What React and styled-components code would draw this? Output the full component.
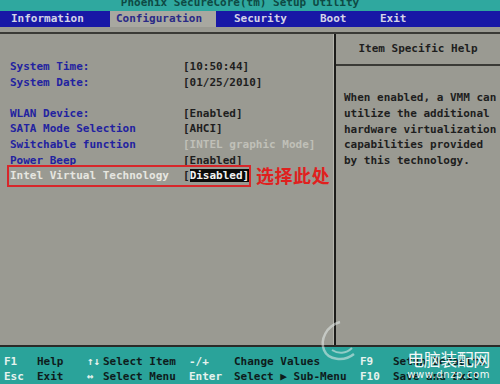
import React from 'react';
import styled, { createGlobalStyle } from 'styled-components';

const GlobalStyle = createGlobalStyle`
  html, body {
    margin: 0;
    padding: 0;
    background: #9a9a92;
  }
  body {
    width: 500px;
    height: 384px;
    overflow: hidden;
    font-family: "DejaVu Sans Mono", "Liberation Mono", monospace;
    font-size: 11px;
    font-weight: bold;
  }
`;

const Screen = styled.div`
  position: relative;
  width: 500px;
  height: 384px;
  display: flex;
  flex-direction: column;
  background: #9a9a92;
  overflow: hidden;
`;

const TitleBar = styled.div`
  height: 11px;
  background: #2fa89f;
  color: #0e4a44;
  text-align: center;
  padding-right: 20px;
  line-height: 6px;
  overflow: hidden;
`;

const MenuBar = styled.div`
  height: 16px;
  background: #1818a6;
  display: flex;
  align-items: stretch;
`;

const Tab = styled.div`
  width: ${p => p.$w}px;
  padding-left: ${p => p.$pad || 0}px;
  box-sizing: border-box;
  line-height: 16px;
  color: ${p => (p.$active ? '#2a2a86' : '#d4d4e8')};
  background: ${p => (p.$active ? '#a8a8a0' : 'transparent')};
`;

const Main = styled.div`
  margin-top: 5px;
  border-top: 2px solid #3a3a36;
  height: 312px;
  display: flex;
`;

const LeftPanel = styled.div`
  width: 334px;
  padding: 25px 0 0 10px;
  box-sizing: border-box;
  border-right: 1px solid #b6b6ae;
`;

const RightPanel = styled.div`
  flex: 1;
  border-left: 2px solid #1c1c1a;
  display: flex;
  flex-direction: column;
`;

const HelpHeader = styled.div`
  height: 30px;
  border-bottom: 2px solid #3a3a36;
  color: #1e1e1e;
  display: flex;
  align-items: center;
  justify-content: center;
`;

const HelpText = styled.div`
  padding: 24px 0 0 8px;
  color: #1e1e1e;
  line-height: 15.8px;
  white-space: pre;
`;

const Row = styled.div`
  display: grid;
  grid-template-columns: 173px 1fr;
  line-height: 15.6px;
  height: 15.6px;
  margin-bottom: ${p => (p.$gap ? 15.6 : 0)}px;
  white-space: pre;
`;

const Label = styled.span`
  color: ${p => (p.$light ? '#e6e6e0' : '#2222a0')};
`;

const Value = styled.span`
  color: ${p => (p.$dim ? '#c0c0b8' : '#1e1e1e')};
`;

const Picked = styled.span`
  background: #0a0a0a;
  color: #f2f2f2;
`;

const Marked = styled.div`
  position: relative;
  &::after {
    content: '';
    position: absolute;
    left: -3px;
    top: -3px;
    width: 240px;
    height: 18px;
    border: 2px solid #d8262a;
  }
`;

const Note = styled.span`
  position: absolute;
  left: 246px;
  top: -4px;
  font-family: "Noto Sans CJK SC", sans-serif;
  font-size: 18px;
  font-weight: bold;
  line-height: 22px;
  color: #e0201e;
  letter-spacing: 0.5px;
`;

const Footer = styled.div`
  flex: 1;
  border-top: 2px solid #2a2a28;
  background: #2aa39a;
  padding: 7px 0 0 4px;
  display: grid;
  grid-template-columns: 33px 50px 16px 86px 45px 126px 33px 1fr;
  grid-auto-rows: 15px;
  align-items: center;
  white-space: pre;
`;

const Key = styled.span`
  color: #e6f2ee;
`;

const Desc = styled.span`
  color: #0e1c1c;
`;

const Watermark = styled.div`
  position: absolute;
  right: 10px;
  bottom: 3px;
  display: flex;
  flex-direction: column;
  align-items: center;
  color: #f4f8f8;
`;

const MarkTitle = styled.span`
  font-family: "Noto Sans CJK SC", sans-serif;
  font-size: 17px;
  font-weight: normal;
  line-height: 19px;
  letter-spacing: -0.5px;
`;

const MarkUrl = styled.span`
  font-family: "DejaVu Sans", sans-serif;
  font-weight: normal;
  font-size: 10px;
  letter-spacing: 0.6px;
  line-height: 13px;
`;

const Swoosh = styled.svg`
  position: absolute;
  left: 318px;
  top: 320px;
  opacity: 0.55;
`;

const footerRows = [
  ['F1', 'Help', '↑↓', 'Select Item', '-/+', 'Change Values', 'F9', 'Setup Defaults'],
  ['Esc', 'Exit', '↔', 'Select Menu', 'Enter', 'Select ▶ Sub-Menu', 'F10', 'Save and Exit'],
];

export default function App() {
  return (
    <Screen>
      <GlobalStyle />
      <TitleBar>Phoenix SecureCore(tm) Setup Utility</TitleBar>
      <MenuBar>
        <Tab $w={110} $pad={11}>Information</Tab>
        <Tab $w={106} $pad={6} $active>Configuration</Tab>
        <Tab $w={102} $pad={18}>Security</Tab>
        <Tab $w={62} $pad={2}>Boot</Tab>
        <Tab $w={60} $pad={0}>Exit</Tab>
      </MenuBar>
      <Main>
        <LeftPanel>
          <Row><Label>System Time:</Label><Value>[10:50:44]</Value></Row>
          <Row $gap><Label>System Date:</Label><Value>[01/25/2010]</Value></Row>
          <Row><Label>WLAN Device:</Label><Value>[Enabled]</Value></Row>
          <Row><Label>SATA Mode Selection</Label><Value>[AHCI]</Value></Row>
          <Row><Label>Switchable function</Label><Value $dim>[INTEL graphic Mode]</Value></Row>
          <Row><Label>Power Beep</Label><Value>[Enabled]</Value></Row>
          <Marked>
            <Row>
              <Label $light>Intel Virtual Technology</Label>
              <Value>[<Picked>Disabled]</Picked></Value>
            </Row>
            <Note>选择此处</Note>
          </Marked>
        </LeftPanel>
        <RightPanel>
          <HelpHeader>Item Specific Help</HelpHeader>
          <HelpText>
            {'When enabled, a VMM can\nutilize the additional\nhardware virtualization\ncapabilities provided\nby this technology.'}
          </HelpText>
        </RightPanel>
      </Main>
      <Footer>
        {footerRows.map((r, i) =>
          r.map((t, j) =>
            j % 2 === 0 ? <Key key={`${i}-${j}`}>{t}</Key> : <Desc key={`${i}-${j}`}>{t}</Desc>
          )
        )}
      </Footer>
      <Swoosh width="40" height="42" viewBox="0 0 40 42">
        <path d="M22 2 C8 6 2 20 6 30 C10 40 26 42 36 34" fill="none" stroke="#e8eeec" strokeWidth="2.5" />
        <path d="M14 30 C20 34 28 34 34 28" fill="none" stroke="#e8eeec" strokeWidth="2" />
      </Swoosh>
      <Watermark>
        <MarkTitle>电脑装配网</MarkTitle>
        <MarkUrl>www.dnzp.com</MarkUrl>
      </Watermark>
    </Screen>
  );
}
